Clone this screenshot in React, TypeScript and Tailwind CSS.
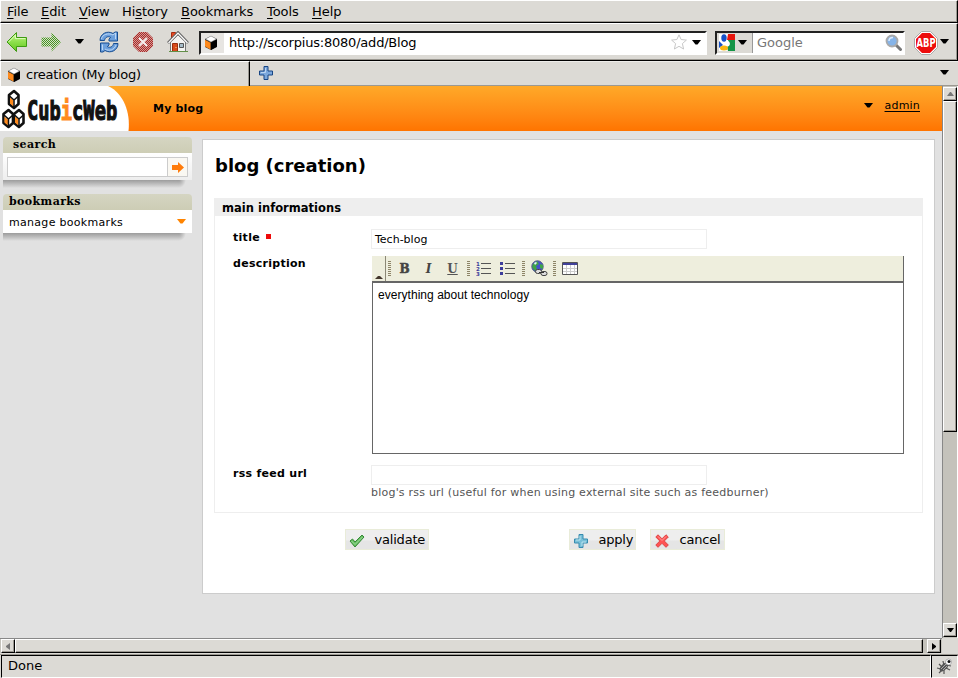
import React from 'react';

const raised = 'border border-t-white border-l-white border-r-black border-b-black bg-[#dcdad5] shadow-[inset_-1px_-1px_0_#9b9891]';

function Down({ className = '', fill = '#000' }: { className?: string; fill?: string }) {
  return (
    <svg width="9" height="5" viewBox="0 0 9 5" className={'shrink-0 ' + className}>
      <path d="M0 0h9L5.5 4.5h-2z" fill={fill} />
    </svg>
  );
}

function Cube({ className = '' }: { className?: string }) {
  return (
    <svg width="14" height="16" viewBox="0 0 14 16" className={'shrink-0 ' + className}>
      <path d="M7 1L13 4v8L7 15 1 12V4z" fill="#222" />
      <path d="M7 1l5.500 3L7 7 1.500 4z" fill="#fff" stroke="#999" strokeWidth=".5" />
      <path d="M1 4.800l5.500 3v6.600L1 11.500z" fill="#ff8a1c" />
      <path d="M7 7.500L13 4.500v7L7 15z" fill="#000" />
    </svg>
  );
}

const menus: [string, string, string, string][] = [
  ['', 'F', 'ile', 'w-[34px]'],
  ['', 'E', 'dit', 'w-[38px]'],
  ['', 'V', 'iew', 'w-[43px]'],
  ['Hi', 's', 'tory', 'w-[59px]'],
  ['', 'B', 'ookmarks', 'w-[86px]'],
  ['', 'T', 'ools', 'w-[45px]'],
  ['', 'H', 'elp', 'w-[40px]'],
];

function MenuBar() {
  return (
    <div className={'flex h-[23px] pl-[6px] pt-[2px] text-[13px] leading-[17px] ' + raised}>
      {menus.map(([a, b, c, w]) => (
        <div key={b + c} className={'shrink-0 tracking-[-0.05px] ' + w}>
          {a}<span className="underline underline-offset-2">{b}</span>{c}
        </div>
      ))}
    </div>
  );
}

function Arrow({ flip = false }: { flip?: boolean }) {
  return (
    <svg width="22" height="22" viewBox="0 0 22 22" className={'shrink-0 ' + (flip ? '-scale-x-100' : '')}>
      <defs>
        <linearGradient id="green" x1="0" y1="0" x2="0" y2="1">
          <stop offset="0" stopColor="#c8f58c" /><stop offset=".5" stopColor="#8de04c" /><stop offset="1" stopColor="#62c61d" />
        </linearGradient>
        <pattern id="dots" width="2" height="2" patternUnits="userSpaceOnUse">
          <path d="M0 0h1v1H0zM1 1h1v1H1z" fill="#489024" />
          <path d="M1 0h1v1H1zM0 1h1v1H0z" fill="#d4e4c8" />
        </pattern>
      </defs>
      <path d="M1 11L10.500 1.500V6.500H20.500V15.500H10.500V20.500z" fill={flip ? 'url(#dots)' : 'url(#green)'} stroke={flip ? 'none' : '#3e9b12'} strokeLinejoin="round" />
      {!flip && <path d="M2.600 11l6.800-6.800V7.600h10" fill="none" stroke="#e6ffc9" strokeWidth=".9" />}
    </svg>
  );
}

function Toolbar() {
  return (
    <div className={'flex h-[38px] items-start pl-[5px] pt-[7px] text-[13px] ' + raised}>
      <Arrow />
      <div className="ml-[12px] flex"><Arrow flip /></div>
      <Down className="ml-[13px] mt-[8px]" />
      <svg width="20" height="22" viewBox="0 0 20 22" className="ml-[15px] shrink-0">
        <path d="M1 9.500C1 3 8-1 14 2.500L16 1h2.500v9H10V8l1.700-1.600C9 4.800 6 6.200 5.500 9.500z" fill="#6c9fdc" stroke="#174d91" strokeLinejoin="round" />
        <path d="M19 12.500c0 6.500-7 10.500-13 7L4 21H1.500v-9H10v2l-1.700 1.600c2.700 1.600 5.700.2 6.200-3.100z" fill="#6c9fdc" stroke="#174d91" strokeLinejoin="round" />
        <path d="M2.500 8C3 3.500 9.500 1.500 14 4l2.500-2v6M3.500 19v-5.500M6 18c4 2.500 9.500 1 11-4" fill="none" stroke="#c5ddf6" strokeWidth=".9" />
      </svg>
      <svg width="20" height="20" viewBox="0 0 20 20" className="ml-[14px] mt-[1px] shrink-0">
        <defs>
          <pattern id="reddots" width="2" height="2" patternUnits="userSpaceOnUse">
            <path d="M0 0h2v2H0z" fill="#d59a94" /><path d="M0 0h1v1H0zM1 1h1v1H1z" fill="#a82b2b" />
          </pattern>
        </defs>
        <path d="M6 0h8l6 6v8l-6 6H6l-6-6V6z" fill="url(#reddots)" />
        <path d="M6 6l8 8M14 6l-8 8" stroke="#f5eeee" strokeWidth="2" />
      </svg>
      <svg width="22" height="22" viewBox="0 0 22 22" className="ml-[14px] shrink-0">
        <path d="M4.500 1.500h4v8h-4z" fill="#e64a24" stroke="#a52c12" />
        <path d="M3.500 11L11 4l7.500 7v9.500h-15z" fill="#f4f4f2" stroke="#777" />
        <path d="M1 12L11 1.500 21 12" fill="none" stroke="#666" strokeWidth="2.600" />
        <path d="M1.500 12L11 2l9.500 10" fill="none" stroke="#fff" strokeWidth="1.200" />
        <path d="M5.500 12.500h5v8h-5z" fill="#d84b1c" stroke="#9a2e0e" />
        <path d="M12.500 12.500h4v4h-4z" fill="#a7bdc9" stroke="#555" />
        <path d="M2 20.500h19" stroke="#639048" strokeWidth="1" />
        <path d="M8.500 16h1v1h-1z" fill="#fd8" />
      </svg>
      <div className="ml-[10px] flex h-[24px] w-[508px] shrink-0 border-2 border-b-white border-l-[#222] border-r-white border-t-[#222] bg-white">
        <div className="flex h-full w-[23px] items-center bg-[#e7e5e2] pl-[3px]"><Cube /></div>
        <div className="ml-[5px] w-[440px] tracking-[-0.21px] leading-[19px]">http://scorpius:8080/add/Blog</div>
        <svg width="16" height="16" viewBox="0 0 16 16" className="ml-[2px] mt-[1px] shrink-0">
          <path d="M8 .8l2.100 4.700 5.300.6-4 3.500 1.200 5.400L8 12.300 3.400 15l1.200-5.400-4-3.500 5.300-.6z" fill="#fff" stroke="#c8c8c8" />
        </svg>
        <Down className="ml-[5px] mt-[7px]" />
      </div>
      <div className="ml-[8px] flex h-[24px] w-[190px] shrink-0 border-2 border-b-white border-l-[#222] border-r-white border-t-[#222] bg-white">
        <div className="flex h-full w-[36px] shrink-0 border-r border-[#999] bg-[#dcdad5] pl-[2px] pt-[1px]">
          <svg width="16" height="17" viewBox="0 0 16 17" className="shrink-0">
            <path d="M0 0h16v17H0z" fill="#fff" />
            <path d="M9 0h7v6H8z" fill="#e8150d" />
            <path d="M9 6h7v11H9l-1-4 2-3z" fill="#159447" />
            <path d="M0 7l4 4-4 3z" fill="#1751c8" />
            <ellipse cx="5" cy="4" rx="2.700" ry="3.700" fill="#1751c8" />
            <path d="M7 7c4 1 4 4 1 5" stroke="#fff" strokeWidth="1.500" fill="none" />
            <ellipse cx="5" cy="14" rx="4" ry="2.500" fill="#f8b712" />
          </svg>
          <Down className="ml-[3px] mt-[6px]" />
        </div>
        <div className="ml-[4px] w-[128px] leading-[19px] text-[#777]">Google</div>
        <svg width="17" height="17" viewBox="0 0 17 17" className="mt-[1px] shrink-0">
          <path d="M10.500 10.500l5 5" stroke="#777" strokeWidth="3" strokeLinecap="round" />
          <circle cx="7" cy="7" r="5.500" fill="#86b4e8" stroke="#aaa" strokeWidth="1.800" />
          <path d="M4 7c0-2 1.500-3.500 4-3.500" stroke="#dcecff" strokeWidth="1.500" fill="none" />
        </svg>
      </div>
      <svg width="24" height="24" viewBox="0 0 24 24" className="ml-[9px] shrink-0">
        <path d="M7.500.5h9l7 7v9l-7 7h-9l-7-7v-9z" fill="#fff" stroke="#aaa" />
        <path d="M8 2h8l6 6v8l-6 6H8l-6-6V8z" fill="#ed0d0d" />
        <g transform="translate(2.500 16.300) scale(.7 1)">
          <text fontFamily="DejaVu Sans" fontWeight="700" fontSize="12" fill="#fff">ABP</text>
        </g>
      </svg>
      <Down className="ml-[2px] mt-[8px]" />
    </div>
  );
}

function TabBar() {
  return (
    <div className="flex h-[25px] bg-[#dcdad5] text-[13px]">
      <div className="flex w-[250px] border-l border-r border-t border-l-white border-r-black border-t-white pl-[6px] shadow-[inset_-1px_0_0_#9b9891]">
        <Cube className="mt-[5px]" />
        <span className="ml-[5px] mt-[4px] leading-[18px] tracking-[-0.2px]">creation (My blog)</span>
      </div>
      <div className="flex flex-1 border-b border-t border-b-[#9b9891] border-t-[#eeedea]">
        <svg width="14" height="14" viewBox="0 0 14 14" className="ml-[9px] mt-[4px] shrink-0">
          <path d="M5 .5h4V5h4.500v4H9v4.500H5V9H.5V5H5z" fill="#7ba7dc" stroke="#174584" />
          <path d="M6.500 2v4.500H2" fill="none" stroke="#bcd5f1" />
        </svg>
        <Down className="ml-auto mr-[9px] mt-[8px]" />
      </div>
    </div>
  );
}

function LogoCube({ x, y }: { x: number; y: number }) {
  return (
    <g transform={`translate(${x} ${y})`}>
      <path d="M6 1L10.500 5v9L6 18 1 14V5z" fill="#fff" stroke="#111" strokeWidth="2.600" strokeLinejoin="round" />
      <path d="M2 7.500l3.500 3v6L2 13.500z" fill="#ff8a1c" />
      <path d="M1.500 6L6 10l4.500-4M6 9.500v8" fill="none" stroke="#111" strokeWidth="1.500" />
    </g>
  );
}

function Header() {
  return (
    <div className="flex h-[45px] bg-linear-to-b from-[#ffa928] to-[#ff7400]">
      <div className="relative h-[45px] w-[130px] shrink-0">
        <svg width="130" height="45" viewBox="0 0 130 45" className="absolute left-0 top-0">
          <path d="M0 0h108C120 5 131 22 128.500 45H0z" fill="#fff" />
          <LogoCube x={8} y={4} />
          <LogoCube x={2.500} y={23} />
          <LogoCube x={13} y={23} />
        </svg>
        <div className="absolute left-[27px] top-[8px] origin-left scale-x-[0.72] whitespace-nowrap font-['DejaVu_Sans_Mono',monospace] text-[26px] font-bold leading-[34px] text-[#111] [-webkit-text-stroke:1.2px_currentColor]">
          Cub<span className="text-[#ff8a1c]">i</span>cWeb
        </div>
      </div>
      <span className="ml-[23px] mt-[16px] text-[11px] font-bold leading-[14px] tracking-[0.2px]">My blog</span>
      <Down className="ml-auto mt-[17px]" />
      <span className="ml-[12px] mr-[22px] mt-[13px] text-[11px] leading-[14px] tracking-[0.2px] underline underline-offset-2">admin</span>
    </div>
  );
}

function BoxTitle({ children, pad }: { children: React.ReactNode; pad: string }) {
  return (
    <div className={'h-[16px] rounded-t-[4px] bg-linear-to-b from-[#d5d5c2] to-[#cdcdb5] font-["DejaVu_Serif"] text-[11px] font-bold leading-[15px] tracking-[0.4px] ' + pad}>
      {children}
    </div>
  );
}

function BoxShadow() {
  return (
    <div className="flex h-[8px] overflow-hidden">
      <div className="w-[176px] bg-linear-to-b from-[#9c9c9c] to-[#e1e1e1]" />
      <div className="w-[7px] bg-radial-[at_0%_0%] from-[#9c9c9c] to-[#e1e1e1] to-70%" />
    </div>
  );
}

function Sidebar() {
  return (
    <div className="ml-[3px] mt-[6px] w-[189px] shrink-0 text-[11px]">
      <BoxTitle pad="pl-[10px]">search</BoxTitle>
      <div className="flex h-[27px] bg-linear-to-b from-white to-[#eee] pl-[4px] pt-[4px]">
        <div className="h-[20px] w-[161px] border border-[#ccc] bg-white" />
        <div className="flex h-[20px] w-[20px] items-center justify-center border border-l-0 border-[#ccc] bg-[#faf8f2]">
          <svg width="12" height="11" viewBox="0 0 12 11"><path d="M0 3h6V0l6 5.500L6 11V8H0z" fill="#ff7b0a" /></svg>
        </div>
      </div>
      <BoxShadow />
      <div className="h-[6px]" />
      <BoxTitle pad="pl-[6px]">bookmarks</BoxTitle>
      <div className="flex h-[23px] bg-white pl-[6px] leading-[25px]">
        <span className="tracking-[0.3px]">manage bookmarks</span>
        <Down className="ml-auto mr-[6px] mt-[9px]" fill="#ff8400" />
      </div>
      <BoxShadow />
    </div>
  );
}

function Grip({ className = '' }: { className?: string }) {
  return (
    <svg width="3" height="16" viewBox="0 0 3 16" className={'mt-[5px] shrink-0 ' + className}>
      <path d="M1.500 0v16" stroke="#8d8467" strokeWidth="3" strokeDasharray="1 1" />
    </svg>
  );
}

function Editor() {
  return (
    <div className="h-[198px] w-[532px] border-b border-r border-[#666]">
      <div className="flex h-[25px] bg-[#eeeedd]">
        <div className="flex w-[14px] shrink-0 items-end border-r border-[#8c8876] pb-[2px] pl-[3px]">
          <svg width="8" height="4" viewBox="0 0 8 4"><path d="M0 4L3 1h2l3 3z" fill="#44372d" /></svg>
        </div>
        <Grip className="ml-[2px]" />
        <div className="ml-[7.5px] w-[12px] text-center font-['DejaVu_Serif'] text-[12px] font-bold leading-[26px] text-[#444] [-webkit-text-stroke:0.5px_#444]">B</div>
        <div className="ml-[12px] w-[12px] text-center font-['DejaVu_Serif'] text-[12px] font-bold italic leading-[26px] text-[#444]">I</div>
        <div className="ml-[12px] w-[12px] text-center font-['DejaVu_Serif'] text-[12px] font-bold leading-[26px] text-[#555] underline">U</div>
        <Grip className="ml-[8.5px]" />
        <svg width="15" height="15" viewBox="0 0 15 15" className="ml-[6px] mt-[5px] shrink-0">
          <path d="M5 2.500h10M5 7.500h10M5 12.500h10" stroke="#555" />
          {['1', '2', '3'].map((n, i) => (
            <text key={n} x="0" y={4.500 + i * 5} fontSize="5.500" fontFamily="DejaVu Sans" fontWeight="700" fill="#3d3d9b">{n}</text>
          ))}
        </svg>
        <svg width="15" height="15" viewBox="0 0 15 15" className="ml-[9px] mt-[5px] shrink-0">
          <path d="M5 2.500h10M5 7.500h10M5 12.500h10" stroke="#555" />
          <path d="M0 1h3v3H0zM0 6h3v3H0zM0 11h3v3H0z" fill="#3d3d9b" />
        </svg>
        <Grip className="ml-[7px]" />
        <svg width="17" height="17" viewBox="0 0 17 17" className="ml-[6px] mt-[4px] shrink-0">
          <circle cx="6.500" cy="6.500" r="5.700" fill="#4652cb" stroke="#555d82" />
          <path d="M2 4l4-3 2 3-3 2 1 3-2 2-3-4zM9 4l3 1v4L9 8z" fill="#3fa447" />
          <path d="M3 3l2-1 1 1-2 2z" fill="#e8f5ff" />
          <rect x="4.500" y="9.500" width="6" height="4" rx="2" fill="#ddd" stroke="#444" />
          <rect x="10" y="11.500" width="6" height="4" rx="2" fill="#ddd" stroke="#444" />
          <path d="M8 12.500h5" stroke="#333" />
        </svg>
        <Grip className="ml-[5px]" />
        <svg width="16" height="13" viewBox="0 0 16 13" className="ml-[6px] mt-[6px] shrink-0">
          <path d="M.5.5h15v12H.5z" fill="#fff" stroke="#555" />
          <path d="M1 1h14v2H1z" fill="#41419a" />
          <path d="M1 6.500h14M1 9.500h14M4.500 3v9M8.500 3v9M12.500 3v9" stroke="#ccc" />
        </svg>
      </div>
      <div className="h-[172px] border-l border-t-2 border-l-[#666] border-t-[#666] bg-white pl-[5px] pt-[4px] font-['Liberation_Sans',Arial,sans-serif] text-[12px] leading-[16px] tracking-[0.04px]">
        everything about technology
      </div>
    </div>
  );
}

function FormButton({ icon, label, width, className = '' }: { icon: React.ReactNode; label: string; width: string; className?: string }) {
  return (
    <div className={'flex h-[21px] border border-[#e9ecd9] bg-linear-to-b from-[#eee] from-50% to-[#e5e5e5] to-60% text-[13px] leading-[19px] tracking-[-0.2px] ' + width + ' ' + className}>
      <div className="ml-[4px] mt-[4px] w-[24.5px] shrink-0">{icon}</div>
      <span>{label}</span>
    </div>
  );
}

function Label({ children }: { children: React.ReactNode }) {
  return <div className="w-[138px] shrink-0 text-[11px] font-bold leading-[14px] tracking-[0.28px]">{children}</div>;
}

function Main() {
  return (
    <div className="ml-[10px] mt-[8px] h-[455px] w-[733px] shrink-0 border border-[#ccc] bg-white pl-[11px]">
      <h1 className="ml-px mt-[14px] h-[24px] whitespace-nowrap text-[18px] font-bold leading-[24px]">blog (creation)</h1>
      <div className="mt-[20px] h-[315px] w-[709px] border border-[#eee]">
        <div className="h-[17px] bg-[#eee] pl-[7px] text-[11.5px] font-bold leading-[18px] tracking-[0.02px]">main informations</div>
        <div className="flex h-[40px] pl-[18px] pt-[13px]">
          <div className="mt-[2px]"><Label>title<span className="ml-[6px] inline-block h-[5px] w-[5px] bg-[#ee0a0a] align-[2px]" /></Label></div>
          <div className="h-[20px] w-[336px] border border-[#eee] pl-[3px] text-[11px] leading-[20px]">Tech-blog</div>
        </div>
        <div className="flex h-[209px] pl-[18px]">
          <div className="mt-[1px] shrink-0"><Label>description</Label></div>
          <div className="ml-px"><Editor /></div>
        </div>
        <div className="flex pl-[18px]">
          <div className="mt-[2px]"><Label>rss feed url</Label></div>
          <div>
            <div className="h-[20px] w-[336px] border border-[#eee]" />
            <div className="mt-px whitespace-nowrap text-[11px] leading-[14px] tracking-[0.22px] text-[#555]">blog's rss url (useful for when using external site such as feedburner)</div>
          </div>
        </div>
      </div>
      <div className="mt-[16px] flex pl-[131px]">
        <FormButton label="validate" width="w-[84px]" icon={
          <svg width="16" height="14" viewBox="0 0 16 14" className="-ml-px">
            <path d="M1 7l2.500-2L6 8l7-7 2 2L6 13z" fill="#64bd60" stroke="#368a38" strokeLinejoin="round" />
            <path d="M2.500 7L6 10.500 13.500 3" stroke="#a1dda0" fill="none" />
          </svg>} />
        <FormButton label="apply" width="w-[67px]" className="ml-[140px]" icon={
          <svg width="14" height="14" viewBox="0 0 14 14">
            <path d="M5 .5h4V5h4.500v4H9v4.500H5V9H.5V5H5z" fill="#79c0d8" stroke="#378baf" />
            <path d="M6 2v4H2M8 12V8h4" fill="none" stroke="#bbe3ee" />
          </svg>} />
        <FormButton label="cancel" width="w-[75px]" className="ml-[14px]" icon={
          <svg width="14" height="14" viewBox="0 0 14 14">
            <path d="M3 .8l4 4 4-4L13.300 3 9.300 7l4 4-2.300 2.300-4-4-4 4L.8 11l4-4-4-4z" fill="#ff5252" stroke="#dc4545" />
            <path d="M3 2.500l4 4 4-4" fill="none" stroke="#ff9a9a" />
          </svg>} />
      </div>
    </div>
  );
}

function VScroll() {
  return (
    <div className="w-[16px] shrink-0 border-l border-r border-l-[#888] border-r-white bg-[#c4c2bb]">
      <div className={'mt-px flex h-[14px] items-center justify-center ' + raised}>
        <svg width="7" height="4" viewBox="0 0 7 4"><path d="M0 4l3-4h1l3 4z" fill="#777" /></svg>
      </div>
      <div className={'h-[331px] ' + raised} />
      <div className="h-[191px]" />
      <div className={'flex h-[14px] items-center justify-center ' + raised}>
        <svg width="7" height="4" viewBox="0 0 7 4"><path d="M0 0h7L4 4H3z" fill="#000" /></svg>
      </div>
    </div>
  );
}

function HScroll() {
  return (
    <div className="flex h-[16px] bg-[#dcdad5]">
      <div className="flex h-[15px] w-[942px] border-t border-[#888] bg-[#c4c2bb] pl-px">
        <div className={'flex w-[14px] items-center justify-center ' + raised}>
          <svg width="4" height="7" viewBox="0 0 4 7"><path d="M4 0v7L0 4V3z" fill="#777" /></svg>
        </div>
        <div className={'w-[908px] ' + raised} />
        <div className="w-[4px]" />
        <div className={'flex w-[14px] items-center justify-center ' + raised}>
          <svg width="4" height="7" viewBox="0 0 4 7"><path d="M0 0v7l4-3V3z" fill="#000" /></svg>
        </div>
      </div>
    </div>
  );
}

function StatusBar() {
  return (
    <div className="flex h-[24px] border-t border-[#9b9891] bg-[#dcdad5] text-[13px]">
      <div className="ml-px w-[930px] border border-b-white border-l-black border-r-white border-t-black pl-[6px] leading-[20px]">Done</div>
      <div className="flex flex-1 border border-b-white border-l-black border-r-white border-t-black pl-[4px] pt-[2px]">
        <svg width="17" height="17" viewBox="0 0 17 17">
          <path d="M3 6l3 3M7 3l1 5M1 10l4 1M3 15l3-3M8 12v4M10 10l4 2M10 7l5 1" stroke="#555" strokeWidth="1.200" />
          <ellipse cx="8" cy="9" rx="5.500" ry="3" transform="rotate(-45 8 9)" fill="#555" />
          <path d="M5 11l5-5M7 12l4-4" stroke="#aaa" />
          <circle cx="12.500" cy="4" r="3" fill="#fff" stroke="#888" strokeWidth=".6" />
          <circle cx="13" cy="3.500" r="1.500" fill="#111" />
        </svg>
      </div>
    </div>
  );
}

export default function App() {
  return (
    <div className="flex h-[678px] w-[958px] flex-col overflow-hidden bg-[#dcdad5] font-['DejaVu_Sans',sans-serif] text-black">
      <MenuBar />
      <Toolbar />
      <TabBar />
      <div className="flex h-[552px]">
        <div className="w-[942px] shrink-0 bg-[#e1e1e1]">
          <Header />
          <div className="flex">
            <Sidebar />
            <Main />
          </div>
        </div>
        <VScroll />
      </div>
      <HScroll />
      <StatusBar />
    </div>
  );
}
